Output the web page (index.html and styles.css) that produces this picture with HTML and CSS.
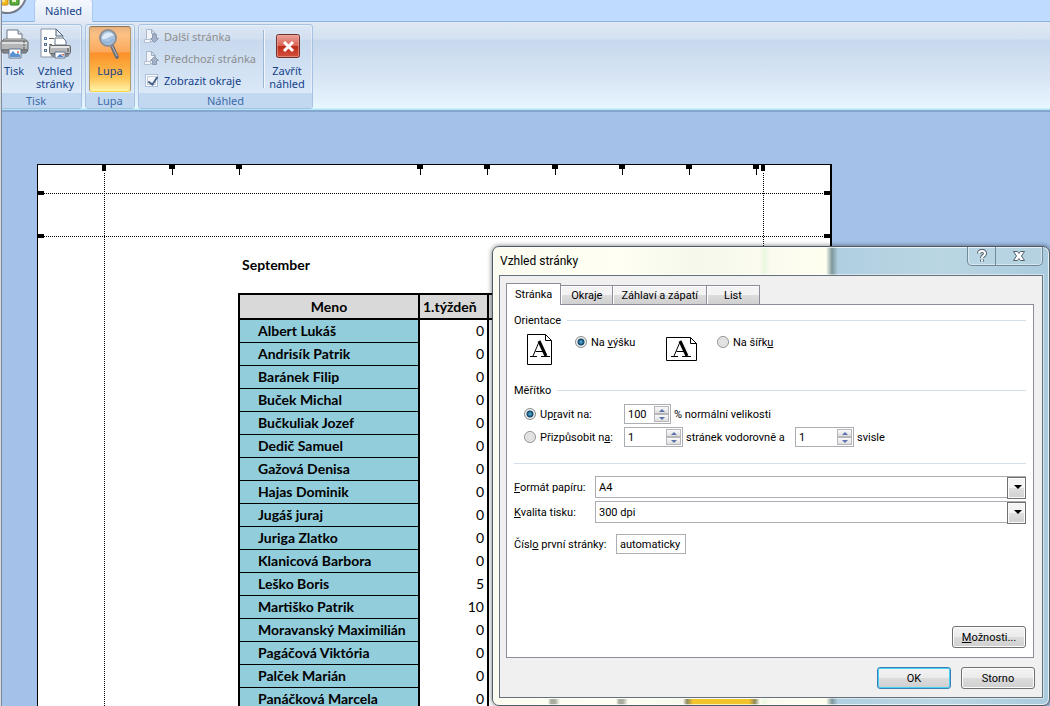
FILE: index.html
```html
<!DOCTYPE html>
<html lang="cs">
<head>
<meta charset="utf-8">
<title>Náhled</title>
<link rel="stylesheet" href="styles.css">
</head>
<body>
<div class="window">
  <header>
    <nav class="tab-strip">
      <svg class="orb" width="30" height="16" viewBox="0 0 30 16" aria-hidden="true">
        <defs><linearGradient id="orbFill" x1="0" y1="0" x2="0" y2="1"><stop offset="0" stop-color="#dfe3e8"/><stop offset="1" stop-color="#fff"/></linearGradient></defs>
        <circle cx="5" cy="-6" r="19" fill="url(#orbFill)" stroke="#737b88" stroke-width="2"/>
        <circle cx="5" cy="-6" r="17" fill="none" stroke="#fff"/>
        <rect x="-4" y="-2" width="10" height="7" rx="1" fill="#f3b91f" stroke="#c98a12"/>
        <rect x="-2" y="-1" width="5" height="3" fill="#fbe48e"/>
        <rect x="8" y="-2" width="9" height="7" rx="1" fill="#5fae3a" stroke="#327b23"/>
        <rect x="10" y="-1" width="4" height="3" fill="#e4f3cf"/>
      </svg>
      <a class="ribbon-tab" href="#nahled">Náhled</a>
    </nav>
    <div class="ribbon" id="nahled">
      <section class="group group-print">
        <div class="group-body">
          <button class="big-button">
            <svg width="32" height="32" viewBox="0 0 32 32" aria-hidden="true">
              <path d="M9 12V2h11l4 4v6z" fill="#fff" stroke="#6b7685"/><path d="M20 2v4h4" fill="#dfe6ee" stroke="#6b7685"/>
              <path d="M4 13l2-2h21l2 2z" fill="#ddd" stroke="#777"/>
              <rect x="3" y="13" width="27" height="9" rx="1" fill="#b4b6b8" stroke="#6b6e72"/>
              <path d="M4 14h25v2H4z" fill="#dcdddf"/><path d="M25 14h2M25 17h2M25 20h2" stroke="#505358"/>
              <path d="M3 22h27l-2 3H5z" fill="#898c90" stroke="#606368"/>
              <path d="M11 21h12v9H11z" fill="#fff" stroke="#61738f"/>
              <path d="M12 29v-3l3-3 3 3 2-1 2 2v2z" fill="#5b92d2"/><circle cx="20" cy="24" r="1" fill="#de6651"/>
            </svg>
            <span>Tisk</span>
          </button>
          <button class="big-button">
            <svg width="32" height="32" viewBox="0 0 32 32" aria-hidden="true">
              <path d="M2 1h15l7 7v21H2z" fill="#fff" stroke="#8792a2"/><path d="M17 1v7h7z" fill="#e5ebf3" stroke="#4f5e73"/>
              <g fill="#d9e7f5" stroke="#58708f"><rect x="5.500" y="9.500" width="2" height="2"/><rect x="5.500" y="15.500" width="2" height="2"/><rect x="5.500" y="21.500" width="2" height="2"/></g>
              <path d="M10 10.500h5M10 16.500h3M10 22.500h2" stroke="#666"/>
              <path d="M16 17v-7h8l3 3v4z" fill="#fff" stroke="#657488"/>
              <rect x="10.500" y="17.500" width="21" height="8" rx="1" fill="#b4b6b8" stroke="#65686c"/>
              <path d="M12 19h18" stroke="#e7e7e7" stroke-width="2"/><path d="M28 21h2M28 23h2" stroke="#484b50"/>
              <path d="M11 26h20l-2 3H13z" fill="#85888c"/>
              <path d="M16 24h10v6H16z" fill="#fff" stroke="#61738f"/><path d="M18 29l3-3 4 3z" fill="#4d83c8"/><path d="M22 26h3v2z" fill="#dd6c4d"/>
            </svg>
            <span>Vzhled<br>stránky</span>
          </button>
        </div>
        <h2 class="group-name">Tisk</h2>
      </section>
      <section class="group group-zoom">
        <div class="group-body">
          <button class="big-button is-pressed" aria-pressed="true">
            <svg width="32" height="32" viewBox="0 0 32 32" aria-hidden="true">
              <path d="M18 18l5 11" stroke="#6e7078" stroke-width="4" stroke-linecap="round"/><path d="M18 18l5 10" stroke="#b9bcc3" stroke-width="1"/>
              <circle cx="14" cy="10" r="8" fill="#a9c4e2" stroke="#8d8f97" stroke-width="2"/>
              <path d="M8 11c0-7 10-9 12-3-4-1-6 4-12 3z" fill="#dce9f6"/><path d="M9 13c4 3 8 2 10-2" fill="none" stroke="#8fb2d6" stroke-width="2"/>
            </svg>
            <span>Lupa</span>
          </button>
        </div>
        <h2 class="group-name">Lupa</h2>
      </section>
      <section class="group group-preview">
        <div class="group-body">
          <div class="small-items">
            <button class="small-item" disabled>
              <svg width="16" height="16" viewBox="0 0 16 16" aria-hidden="true"><path d="M2.500 1.500h5l4 4v8h-9z" fill="#f1f5fa" stroke="#aab8cc"/><path d="M7.500 1.500v4h4z" fill="#d3deeb" stroke="#9dacc2"/><path d="M.5 11.500h6v3h-6z" fill="#f1f5fa" stroke="#b5c1d2"/><path d="M8.500 6.500h4v4h2l-4 4-4-4h2z" fill="#a3b1c7" stroke="#8c9bb3"/></svg>
              <span>Další stránka</span>
            </button>
            <button class="small-item" disabled>
              <svg width="16" height="16" viewBox="0 0 16 16" aria-hidden="true"><path d="M2.500 1.500h5l4 4v8h-9z" fill="#f1f5fa" stroke="#aab8cc"/><path d="M7.500 1.500v4h4z" fill="#d3deeb" stroke="#9dacc2"/><path d="M.5 11.500h6v3h-6z" fill="#f1f5fa" stroke="#b5c1d2"/><path d="M8.500 14.500h4v-4h2l-4-4-4 4h2z" fill="#a3b1c7" stroke="#8c9bb3"/></svg>
              <span>Předchozí stránka</span>
            </button>
            <label class="small-item"><input class="check" type="checkbox" checked><span>Zobrazit okraje</span></label>
          </div>
          <button class="big-button close-preview">
            <svg width="32" height="32" viewBox="0 0 32 32" aria-hidden="true">
              <defs><linearGradient id="red" x1="0" y1="0" x2="0" y2="1"><stop offset="0" stop-color="#eba59c"/><stop offset=".48" stop-color="#da6455"/><stop offset=".5" stop-color="#bd2b18"/><stop offset="1" stop-color="#d4513f"/></linearGradient></defs>
              <rect x="5.500" y="6.500" width="23" height="23" rx="2" fill="url(#red)" stroke="#6d302b"/><rect x="6.500" y="7.500" width="21" height="21" rx="1" fill="none" stroke="#f0a49b" stroke-opacity=".6"/>
              <path d="M13 14l9 9M22 14l-9 9" stroke="#fff" stroke-width="3"/>
            </svg>
            <span>Zavřít<br>náhled</span>
          </button>
        </div>
        <h2 class="group-name">Náhled</h2>
      </section>
    </div>
  </header>

  <main class="workspace">
    <article class="sheet">
      <svg class="guides" width="100%" height="100%" aria-hidden="true">
        <g stroke="#000" stroke-dasharray="1 1" shape-rendering="crispEdges">
          <path d="M66.500 8V2000"/>
          <line x1="6" x2="100%" y1="28.500" y2="28.500"/>
          <line x1="6" x2="100%" y1="71.500" y2="71.500"/>
          <path d="M725.500 8V2000"/>
        </g>
        <g shape-rendering="crispEdges">
          <path d="M64 0h4v6h-4zM723 0h4v6h-4z"/>
          <path d="M0 26h6v4H0zM0 69h6v4H0z"/>
          <path d="M131 0h6v4h-2v6h-1V4h-3zM198 0h6v4h-2v6h-1V4h-3zM379 0h6v4h-2v6h-1V4h-3zM446 0h6v4h-2v6h-1V4h-3zM514 0h6v4h-2v6h-1V4h-3zM581 0h6v4h-2v6h-1V4h-3zM648 0h6v4h-2v6h-1V4h-3zM715 0h6v4h-2v6h-1V4h-3z"/>
          <svg x="100%" overflow="visible"><path d="M-6 26h6v4h-6zM-6 69h6v4h-6z"/></svg>
        </g>
      </svg>
      <h1 class="month">September</h1>
      <table class="roster">
        <colgroup><col class="col-name"><col class="col-week"><col><col><col><col></colgroup>
        <thead><tr><th>Meno</th><th>1.týždeň</th><th>2.</th><th></th><th></th><th></th></tr></thead>
        <tbody>
          <tr><th>Albert Lukáš</th><td>0</td><td></td><td></td><td></td><td></td></tr>
          <tr><th>Andrisík Patrik</th><td>0</td><td></td><td></td><td></td><td></td></tr>
          <tr><th>Baránek Filip</th><td>0</td><td></td><td></td><td></td><td></td></tr>
          <tr><th>Buček Michal</th><td>0</td><td></td><td></td><td></td><td></td></tr>
          <tr><th>Bučkuliak Jozef</th><td>0</td><td></td><td></td><td></td><td></td></tr>
          <tr><th>Dedič Samuel</th><td>0</td><td></td><td></td><td></td><td></td></tr>
          <tr><th>Gažová Denisa</th><td>0</td><td></td><td></td><td></td><td></td></tr>
          <tr><th>Hajas Dominik</th><td>0</td><td></td><td></td><td></td><td></td></tr>
          <tr><th>Jugáš juraj</th><td>0</td><td></td><td></td><td></td><td></td></tr>
          <tr><th>Juriga Zlatko</th><td>0</td><td></td><td></td><td></td><td></td></tr>
          <tr><th>Klanicová Barbora</th><td>0</td><td></td><td></td><td></td><td></td></tr>
          <tr><th>Leško Boris</th><td>5</td><td></td><td></td><td></td><td></td></tr>
          <tr><th>Martiško Patrik</th><td>10</td><td></td><td></td><td></td><td></td></tr>
          <tr><th>Moravanský Maximilián</th><td>0</td><td></td><td></td><td></td><td></td></tr>
          <tr><th>Pagáčová Viktória</th><td>0</td><td></td><td></td><td></td><td></td></tr>
          <tr><th>Palček Marián</th><td>0</td><td></td><td></td><td></td><td></td></tr>
          <tr><th>Panáčková Marcela</th><td>0</td><td></td><td></td><td></td><td class="marked"></td></tr>
        </tbody>
      </table>
    </article>
  </main>

  <form class="dialog" role="dialog" aria-labelledby="dialog-title">
    <div class="title-bar">
      <h2 class="title" id="dialog-title">Vzhled stránky</h2>
      <div class="caption-buttons">
        <button type="button" class="caption-help" aria-label="Nápověda"><svg width="12" height="14" viewBox="0 0 12 14"><path d="M3 4.500C3 1 9 1 9 4.500 9 7 6 6.500 6 9M6 10.500v2" fill="none" stroke="#56636f" stroke-width="4"/><path d="M3 4.500C3 1 9 1 9 4.500 9 7 6 6.500 6 9M6 10.500v2" fill="none" stroke="#fff" stroke-width="2"/></svg></button>
        <button type="button" class="caption-close" aria-label="Zavřít"><svg width="14" height="12" viewBox="0 0 14 12"><path d="M1.500 1.500h4L7 3.500l1.500-2h4L9.500 6l3 4.500h-4L7 8.500l-1.500 2h-4l3-4.500z" fill="#fff" stroke="#56636f"/></svg></button>
      </div>
    </div>
    <div class="client">
      <div class="tabs" role="tablist">
        <button type="button" class="tab is-active" role="tab" aria-selected="true">Stránka</button>
        <button type="button" class="tab" role="tab">Okraje</button>
        <button type="button" class="tab" role="tab">Záhlaví a zápatí</button>
        <button type="button" class="tab" role="tab">List</button>
      </div>
      <div class="panel" role="tabpanel">
        <h3 class="section-title">Orientace</h3>
        <div class="orientation">
          <svg class="portrait" width="25" height="31" viewBox="0 0 25 31" aria-hidden="true"><path d="M.5.500h18l6 6v24H.5z" fill="#fff" stroke="#000"/><path d="M18.500.500v6h6" fill="none" stroke="#000"/><path d="M3 22.500h7M14 22.500h9M6 22l6-14M8.500 17.500h8" fill="none" stroke="#000"/><path d="M12 7l7 15" stroke="#000" stroke-width="3"/></svg>
          <label class="choice choice-portrait"><input class="radio" type="radio" name="orientation" checked><span>Na <u>v</u>ýšku</span></label>
          <svg class="landscape" width="31" height="24" viewBox="0 0 31 24" aria-hidden="true"><path d="M.5.500h24l6 6v17H.5z" fill="#fff" stroke="#000"/><path d="M24.500.500v6h6" fill="none" stroke="#000"/><path d="M5 19.500h7M16 19.500h9M8 19l6-14M10.500 14.500h8" fill="none" stroke="#000"/><path d="M14 4l7 15" stroke="#000" stroke-width="3"/></svg>
          <label class="choice"><input class="radio" type="radio" name="orientation"><span>Na šířk<u>u</u></span></label>
        </div>
        <h3 class="section-title">Měřítko</h3>
        <div class="scale">
          <label class="choice"><input class="radio" type="radio" name="scale" checked><span>Up<u>r</u>avit na:</span></label>
          <div class="inline">
            <span class="spinner narrow"><input type="text" value="100" aria-label="Procenta"><span class="steps"><button type="button" class="step up" aria-label="Zvýšit"></button><button type="button" class="step down" aria-label="Snížit"></button></span></span>
            <span>% normální velikosti</span>
          </div>
          <label class="choice"><input class="radio" type="radio" name="scale"><span>Přizpůsobit n<u>a</u>:</span></label>
          <div class="inline">
            <span class="spinner"><input type="text" value="1" aria-label="Stránek vodorovně"><span class="steps"><button type="button" class="step up" aria-label="Zvýšit"></button><button type="button" class="step down" aria-label="Snížit"></button></span></span>
            <span class="across">stránek vodorovně a</span>
            <span class="spinner"><input type="text" value="1" aria-label="Stránek svisle"><span class="steps"><button type="button" class="step up" aria-label="Zvýšit"></button><button type="button" class="step down" aria-label="Snížit"></button></span></span>
            <span>svisle</span>
          </div>
        </div>
        <hr class="rule">
        <div class="paper">
          <label for="paper-size"><u>F</u>ormát papíru:</label>
          <div class="dropdown"><select id="paper-size"><option>A4</option></select></div>
          <label for="quality"><u>K</u>valita tisku:</label>
          <div class="dropdown"><select id="quality"><option>300 dpi</option></select></div>
        </div>
        <div class="first-page">
          <label for="first">Čísl<u>o</u> první stránky:</label>
          <input class="text-box" id="first" type="text" value="automaticky">
        </div>
        <div class="panel-actions"><button type="button" class="push"><u>M</u>ožnosti...</button></div>
      </div>
      <div class="actions">
        <button type="button" class="push is-default">OK</button>
        <button type="button" class="push">Storno</button>
      </div>
    </div>
  </form>
</div>
</body>
</html>
```

FILE: styles.css
```css
* { box-sizing: border-box; }
body {
  margin: 0;
  font: 11px/13px "Noto Sans", "Liberation Sans", sans-serif;
  color: #000;
}
button, input, select { font: inherit; color: inherit; margin: 0; }
button { padding: 0; border: 0; background: none; }
h1, h2, h3 { margin: 0; font: inherit; }

.window {
  position: relative;
  display: flex;
  flex-direction: column;
  height: 100vh;
  padding-left: 2px;
  overflow: hidden;
  background: linear-gradient(90deg, #d5dae0 1px, #7f8b9b 1px, #7f8b9b 2px, #a3c1e9 2px);
}

/* Ribbon */
.tab-strip {
  display: flex;
  height: 22px;
  background: #bfdbff;
  border-bottom: 1px solid #8db2e3;
}
.orb { flex: none; }
.ribbon-tab {
  height: 22px;
  margin-left: 2px;
  padding: 4px 10px 0;
  border: 1px solid #a9c8f2;
  border-width: 0 1px;
  border-radius: 3px 3px 0 0;
  background: linear-gradient(#f4f8fe, #e1eaf6);
  color: #15428b;
  text-decoration: none;
}
.ribbon {
  display: flex;
  gap: 3px;
  padding: 2px 0 1px;
  border-bottom: 2px solid #86a6cf;
  background: linear-gradient(#dfe8f3 0, #d4e1f1 17px, #c7d8ed 18px, #d7e5f4 55px, #e7f6ff 86px, #b1eaf5 87px);
  color: #15428b;
}
.group {
  display: flex;
  flex-direction: column;
  border: 1px solid #a6c2e3;
  border-radius: 3px;
  background: linear-gradient(#dde7f4 0, #d2dff0 14px, #c8d9ee 15px, #dae8f7 68px);
  box-shadow: inset 0 0 0 1px rgba(255, 255, 255, .4);
}
.group-print { width: 80px; border-left: 0; border-radius: 0 3px 3px 0; }
.group-zoom { width: 50px; }
.group-preview { width: 175px; }
.group-body { display: flex; height: 68px; }
.group-name {
  height: 15px;
  line-height: 15px;
  text-align: center;
  color: #3e6aaa;
  background: #c1d8f0;
}
.group-print .group-name { padding-right: 11px; }
.big-button {
  display: flex;
  flex-direction: column;
  align-items: center;
  gap: 4px;
  padding-top: 3px;
  line-height: 13px;
}
.big-button svg { flex: none; }
.group-print .big-button:first-child { width: 30px; margin-left: -3px; }
.group-print .big-button + .big-button { width: 56px; }
.group-zoom .group-body { padding: 1px 3px; }
.big-button.is-pressed {
  width: 42px;
  border: 1px solid #b09c6c;
  border-top-color: #8b7654;
  border-bottom-color: #ffd54a;
  border-radius: 3px;
  padding-top: 1px;
  background: linear-gradient(#e8b07c 0, #fcc184 8px, #fba85b 25px, #fb8f28 26px, #fcc151 50px, #fff3a5 100%);
}
.small-items {
  display: flex;
  flex-direction: column;
  gap: 6px;
  width: 124px;
  padding: 3px 0 0 5px;
}
.small-item { display: flex; align-items: center; gap: 4px; height: 16px; white-space: nowrap; }
.small-item:disabled { color: #8d8d8d; }
.check {
  appearance: none;
  flex: none;
  width: 13px;
  height: 13px;
  margin: 0 2px 0 1px;
  border: 1px solid #abc1de;
  background: #f4f8fc;
  box-shadow: inset 0 0 0 1px #fff, inset 0 0 0 2px #c5ced8;
}
.check:checked::after {
  content: "";
  display: block;
  width: 4px;
  height: 8px;
  margin-left: 4px;
  border: solid #4a6289;
  border-width: 0 2px 2px 0;
  transform: rotate(35deg);
}
.close-preview {
  width: 47px;
  margin: 5px 0;
  padding-top: 0;
  border-left: 1px solid #9fb7d7;
  box-shadow: inset 1px 0 #f2f7fd;
  white-space: nowrap;
}
.close-preview svg { margin-top: -2px; }

/* Page preview */
.workspace {
  flex: 1;
  min-height: 0;
  overflow: hidden;
  padding: 52px 218px 0 35px;
  background: #a3c1e9;
}
.sheet {
  position: relative;
  min-height: 1122px;
  padding: 91px 0 0 200px;
  border: 1px solid #000;
  border-right-width: 2px;
  background: #fff;
  font: 14px/22px Lato, "Open Sans", sans-serif;
}
.guides { position: absolute; inset: 0; }
.month { padding-left: 4px; line-height: 18px; font-weight: 700; }
.roster {
  table-layout: fixed;
  width: 519px;
  margin-top: 19px;
  border-collapse: collapse;
}
.col-name { width: 180px; }
.col-week { width: 69px; }
.roster th, .roster td {
  height: 23px;
  padding: 0 3px;
  border: solid #000;
  border-width: 0 2px;
  line-height: 22px;
  white-space: nowrap;
  overflow: hidden;
}
.roster thead th { height: 25px; border-width: 2px; background: #d9d9d9; }
.roster thead th:not(:first-child) { text-align: left; }
.roster tbody th {
  padding-left: 18px;
  border-bottom-width: 1px;
  background: #92cddc;
  text-align: left;
}
.roster td { padding-right: 3px; text-align: right; }
.roster .marked { background: #ffc000; }

/* Dialog */
.dialog {
  position: absolute;
  top: 246px;
  right: 0;
  left: 492px;
  padding: 0 6px 7px;
  border: 1px solid #4f5b64;
  border-radius: 7px;
  background:
    linear-gradient(90deg, transparent 55px, #a9ada0 58px, #a9ada0 62px, transparent 67px, transparent 123px, #a9ada0 126px, #a9ada0 130px, transparent 135px, transparent 190px, #8d8a60 194px, #f2c32a 200px, #f2c32a 256px, #8d8a60 262px, transparent 267px) left bottom / 100% 6px no-repeat,
    linear-gradient(90deg, #fbfcef 0, #fffff4 130px, #f6f8ec 200px, #fbfbf0 267px, #eaf7df 271px, #fafaf0 277px, #fffff0 333px, #7d979c 339px, #b0cfe0 345px, #bad6e3 450px, #aacbdd 100%);
  box-shadow: inset 0 0 0 1px rgba(255, 255, 255, .7), 0 0 5px rgba(0, 0, 0, .55);
  font-family: Roboto, "Noto Sans", sans-serif;
}
.title-bar { display: flex; justify-content: space-between; height: 28px; }
.title { padding: 7px 0 0 1px; font-size: 12px; line-height: 15px; }
.caption-buttons {
  display: flex;
  height: 19px;
  border: 1px solid #71899a;
  border-top: 0;
  border-radius: 0 0 5px 5px;
  background: rgba(190, 215, 230, .5);
  box-shadow: inset 0 0 0 1px rgba(255, 255, 255, .45);
}
.caption-buttons button { display: grid; place-items: center; width: 46px; }
.caption-buttons .caption-help { width: 28px; border-right: 1px solid #71899a; }
.client {
  border: 1px solid #66707a;
  padding: 7px 8px 8px 6px;
  background: #f0f0f0;
  box-shadow: 0 0 0 1px rgba(255, 255, 255, .5);
}
.tabs { display: flex; align-items: flex-end; height: 21px; }
.tab {
  height: 19px;
  padding: 0 10px;
  border: 1px solid #8b8e98;
  border-left-width: 0;
  border-bottom: 0;
  background: linear-gradient(#f3f3f3 50%, #dcdcdc 51%, #d0d0d0);
  box-shadow: inset 1px 1px #fff;
}
.tab:nth-child(3) { padding: 0 8px; }
.tab:last-child { padding: 0 17px; }
.tab.is-active {
  height: 22px;
  margin-bottom: -1px;
  padding: 0 8px;
  border-left-width: 1px;
  background: #fff;
  z-index: 1;
}
.panel {
  padding: 9px 7px 9px;
  border: 1px solid #8b8e98;
  background: #fff;
}
.section-title { display: flex; align-items: center; gap: 6px; }
.section-title::after { content: ""; flex: 1; height: 1px; background: #d5dfe9; }
.orientation { display: flex; height: 57px; padding: 7px 0 0 13px; }
.orientation .choice { height: 16px; }
.portrait { margin-right: 23px; }
.choice-portrait { width: 91px; }
.landscape { margin: 3px 20px 0 0; }
.choice { display: flex; align-items: center; gap: 4px; white-space: nowrap; }
.radio {
  appearance: none;
  flex: none;
  width: 12px;
  height: 12px;
  border: 1px solid #8e8f8f;
  border-radius: 50%;
  background: radial-gradient(circle, #e4e4e4 30%, #c2c6ca);
  box-shadow: inset 0 0 0 1px #f5f5f5;
}
.radio:checked { background: radial-gradient(circle at 50% 50%, #58bfe8 0, #123e63 3px, #e0e7ec 4px, #c8d0d6 5px); }
.scale {
  display: grid;
  grid-template-columns: 100px 1fr;
  gap: 3px 0;
  padding: 7px 0 0 10px;
  align-items: center;
}
.inline { display: flex; align-items: center; gap: 3px; white-space: nowrap; }
.across { width: 106px; }
.spinner {
  display: flex;
  width: 59px;
  height: 20px;
  border: 1px solid #abadb3;
  background: #fff;
}
.spinner.narrow { width: 47px; }
.spinner input { flex: 1; width: 0; min-width: 0; padding: 0 3px; border: 0; background: none; }
.steps { display: flex; flex-direction: column; width: 16px; padding: 1px 1px 1px 0; }
.step {
  flex: 1;
  display: grid;
  place-items: center;
  border: 1px solid #b5b7bb;
  background: linear-gradient(#fafafa, #dedede);
}
.step::before { content: ""; border: 3px solid transparent; }
.up::before { border-top: 0; border-bottom-color: #5c72ad; }
.down::before { border-bottom: 0; border-top-color: #5c72ad; }
.rule { height: 1px; margin: 16px 0 12px; border: 0; background: #d5dfe9; }
.paper { display: grid; grid-template-columns: 81px 1fr; gap: 3px 0; align-items: center; }
.dropdown { position: relative; }
.dropdown select {
  appearance: none;
  display: block;
  width: 100%;
  height: 22px;
  padding: 0 20px 0 3px;
  border: 1px solid #abadb3;
  border-radius: 0;
  background: #fff;
}
.dropdown::before {
  content: "";
  position: absolute;
  top: 1px;
  right: 0;
  width: 17px;
  height: 20px;
  border: 1px solid #707070;
  background: linear-gradient(#f4f4f4 50%, #dfdfdf 51%, #d0d0d0);
  box-shadow: inset 0 0 0 1px #fbfbfb;
  pointer-events: none;
}
.dropdown::after {
  content: "";
  position: absolute;
  top: 9px;
  right: 4px;
  border: 4px solid transparent;
  border-top-color: #000;
  border-bottom: 0;
  pointer-events: none;
}
.first-page { display: grid; grid-template-columns: 102px 70px; align-items: center; margin-top: 11px; white-space: nowrap; }
.text-box { width: 70px; height: 20px; padding: 0 3px; border: 1px solid #abadb3; background: #fff; }
.panel-actions { display: flex; justify-content: flex-end; margin-top: 72px; }
.push {
  width: 74px;
  height: 22px;
  border: 1px solid #707070;
  border-radius: 3px;
  background: linear-gradient(#f3f3f3, #ebebeb 50%, #dcdcdc 51%, #cfcfcf);
  box-shadow: inset 0 0 0 1px #fcfcfc;
}
.push.is-default { border-color: #3c7fb1; box-shadow: inset 0 0 0 1px #46d1f5; }
.actions { display: flex; justify-content: flex-end; gap: 10px; margin: 9px -1px 0 0; }
```
